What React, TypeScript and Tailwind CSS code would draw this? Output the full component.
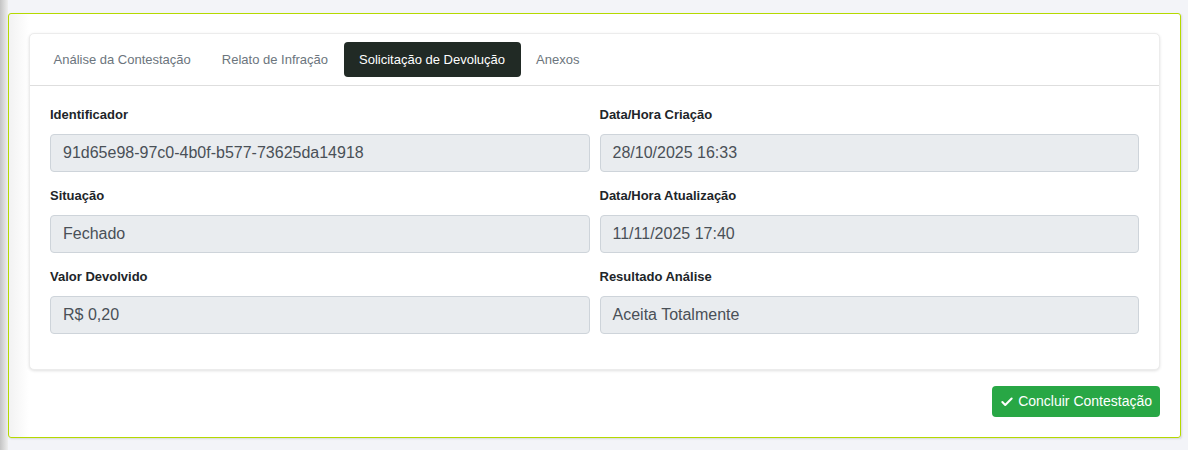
import { Check } from "lucide-react";

const fields = [
  { label: "Identificador", value: "91d65e98-97c0-4b0f-b577-73625da14918" },
  { label: "Data/Hora Criação", value: "28/10/2025 16:33" },
  { label: "Situação", value: "Fechado" },
  { label: "Data/Hora Atualização", value: "11/11/2025 17:40" },
  { label: "Valor Devolvido", value: "R$ 0,20" },
  { label: "Resultado Análise", value: "Aceita Totalmente" },
];

const tabs = ["Análise da Contestação", "Relato de Infração", "Solicitação de Devolução", "Anexos"];

export default function App() {
  return (
    <div className="min-h-[450px] bg-[#f3f4f8] flex font-['Liberation_Sans',Arial,sans-serif]">
      <div className="w-2 shrink-0 bg-[linear-gradient(to_right,#c4c4c4,#eeeeee)]" />
      <div className="flex-1 pt-[13px] pr-[7px] pb-3">
        <div className="border border-[#b5d900] rounded-[3px] bg-[linear-gradient(to_right,#f2f2f2,#ffffff_20px)] px-5 pt-[19px] pb-5 shadow-[1px_1px_2px_rgba(0,0,0,0.12)]">
          <div className="bg-white border border-[#ececec] rounded-[5px] shadow-[0_1px_3px_rgba(0,0,0,0.12)]">
            <div className="flex items-center px-2 pt-2 pb-2 border-b border-[#dedede]">
              {tabs.map((t, i) => (
                <div
                  key={t}
                  className={
                    i === 2
                      ? "h-[35px] flex items-center px-[15.5px] rounded-[4px] bg-[#212a25] text-white text-[13px]"
                      : "h-[35px] flex items-center px-[15.5px] text-[#6c757d] text-[13px]"
                  }
                >
                  {t}
                </div>
              ))}
            </div>
            <div className="px-5 pt-5 pb-5 grid grid-cols-2 gap-x-[10px]">
              {fields.map((f) => (
                <div key={f.label} className="mb-[15px]">
                  <div className="text-[13px] leading-[18px] font-bold text-[#212529] mb-[10px]">{f.label}</div>
                  <div className="h-[38px] flex items-center px-3 bg-[#e9ecef] border border-[#ced4da] rounded-[4px] text-[16px] text-[#495057]">
                    {f.value}
                  </div>
                </div>
              ))}
            </div>
          </div>
          <div className="flex justify-end mt-4">
            <button className="h-[31px] flex items-center gap-1 px-2 bg-[#28a745] text-white text-[14px] rounded-[4px]">
              <Check size={14} strokeWidth={3.5} />
              Concluir Contestação
            </button>
          </div>
        </div>
      </div>
    </div>
  );
}
